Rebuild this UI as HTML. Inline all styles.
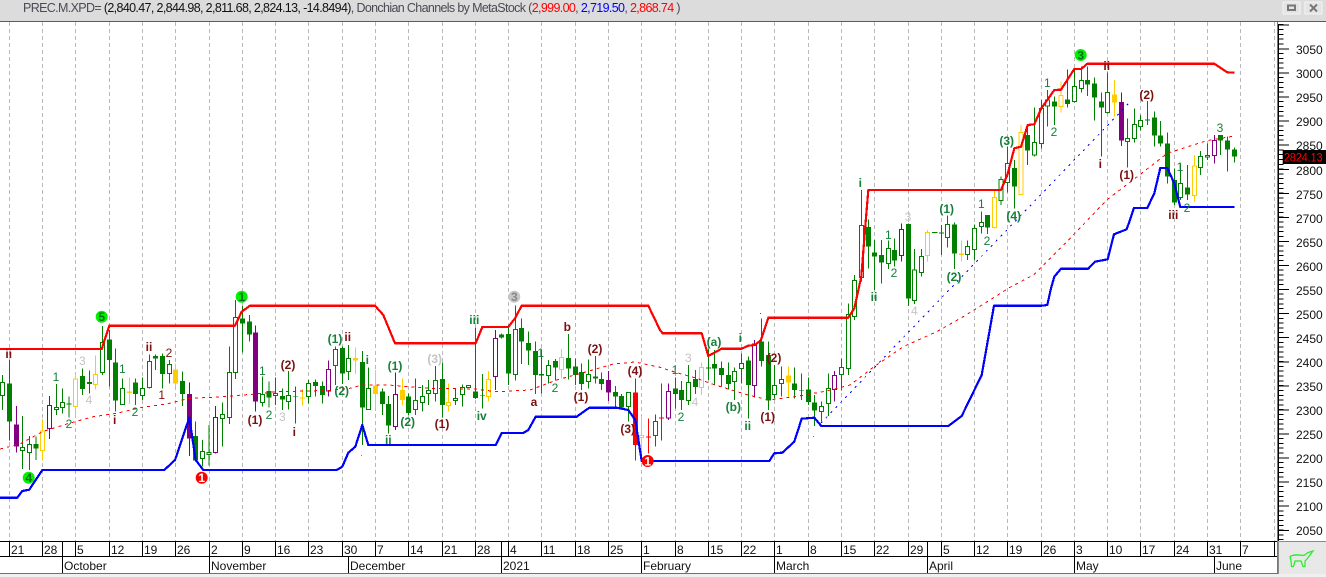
<!DOCTYPE html>
<html lang="en">
<head>
<meta charset="utf-8">
<title>PREC.M.XPD Chart</title>
<style>
html,body{margin:0;padding:0;background:#fff;width:1326px;height:577px;overflow:hidden}
svg{display:block}
.t{font-family:"Liberation Sans",sans-serif}
.gw,.pw,.yw,.rw{fill:none;stroke-width:3}
.gw{stroke:#007f00}.pw{stroke:#800080}.yw{stroke:#ffcc00}.rw{stroke:#f00}
.gb,.pb,.yb,.rb{fill:none;stroke-width:15}
.gb{stroke:#007f00}.pb{stroke:#800080}.yb{stroke:#ffcc00}.rb{stroke:#f00}
.gh,.ph,.yh,.rh{fill:#fff;stroke-width:3}
.gh{stroke:#007f00}.ph{stroke:#800080}.yh{stroke:#ffcc00}.rh{stroke:#f00}
.z{shape-rendering:crispEdges}
.lb text{font-family:"Liberation Sans",sans-serif;font-size:12px;text-anchor:middle}
.g{fill:#14803a}.m{fill:#7c1010}.s{fill:#c4c4c4}
.b{font-weight:bold}
.ax text{font-family:"Liberation Sans",sans-serif;font-size:12px;fill:#111}
</style>
</head>
<body>
<svg width="1326" height="577" viewBox="0 0 1326 577" xmlns="http://www.w3.org/2000/svg">
<rect width="1326" height="577" fill="#fff"/>
<!-- header -->
<rect width="1326" height="21" fill="#dcdcdc"/>
<rect y="21" width="1326" height="1" fill="#5c5c5c"/>
<text class="t" x="23" y="12" font-size="12.5" textLength="657.5" lengthAdjust="spacing" fill="#4a4a55">PREC.M.XPD= <tspan fill="#111">(2,840.47, 2,844.98, 2,811.68, 2,824.13, -14.8494)</tspan>, Donchian Channels by MetaStock (<tspan fill="#f00">2,999.00</tspan>, <tspan fill="#00f">2,719.50</tspan>, <tspan fill="#f00">2,868.74</tspan> )</text>
<!-- window buttons -->
<rect x="1283" y="2" width="17" height="12" fill="#e4e4e4" stroke="#f4f4f4"/>
<rect x="1288" y="5.5" width="7" height="4.5" fill="none" stroke="#777" stroke-width="2"/>
<rect x="1305" y="2" width="17" height="12" fill="#e4e4e4" stroke="#f4f4f4"/>
<path d="M1310 4.5l7 7M1317 4.5l-7 7" stroke="#777" stroke-width="2" fill="none"/>
<!-- grid -->
<path stroke="#b9b9b9" stroke-width="1" stroke-dasharray="4 3" fill="none" class="z" d="M9.5 22V541M42.5 22V541M75.5 22V541M109.5 22V541M142.5 22V541M175.5 22V541M209.5 22V541M242.5 22V541M275.5 22V541M308.5 22V541M342.5 22V541M375.5 22V541M408.5 22V541M442.5 22V541M475.5 22V541M508.5 22V541M541.5 22V541M575.5 22V541M608.5 22V541M641.5 22V541M675.5 22V541M708.5 22V541M741.5 22V541M774.5 22V541M808.5 22V541M841.5 22V541M874.5 22V541M908.5 22V541M941.5 22V541M974.5 22V541M1007.5 22V541M1041.5 22V541M1074.5 22V541M1107.5 22V541M1140.5 22V541M1174.5 22V541M1207.5 22V541M1240.5 22V541M1274.5 22V541"/>
<!-- candles zone A -->
<g class="z" transform="translate(0,290) scale(.33333)">
<path class="gw" d="M28 210V452M108 440V510M207 320V382M247 235V315M268 242V310M328 120V290M347 175V365M407 265V345M467 193V240M487 190V295M547 245V348M587 395V515M727 48V187M748 75V155M807 275V352M847 295V360M886 290V400M946 268V320M967 275V340M7 255V360M67 378V537M88 438V540M169 282V375M187 295V370M307 108V255M367 265V345M427 262V330M448 193V295M508 210V280M607 450V530M627 405V527M667 337V470M688 170V402M707 30V267M787 260V350M827 262V345M866 243V358M925 270V340"/>
<path class="gb" d="M28 280V395M108 462V475M207 340V344M247 258V297M268 276V282M328 148V210M347 217V332M407 277V312M467 198V206M487 198V252M547 273V312M587 438V512M727 85V101M748 94V134M807 303V323M847 318V329M886 319V321M946 276V288M967 288V315"/>
<path class="gh" d="M1 277h12v40h-12zM61 472h12v10h-12zM82 463h12v24h-12zM163 352h12v6h-12zM181 337h12v15h-12zM301 157h12v91h-12zM361 295h12v48h-12zM421 295h12v22h-12zM442 214h12v78h-12zM502 223h12v27h-12zM601 484h12v22h-12zM621 487h12v6h-12zM661 373h12v12h-12zM682 247h12v136h-12zM701 82h12v166h-12zM781 313h12v25h-12zM821 310h12v6h-12zM860 316h12v18h-12zM919 280h12v40h-12z"/>
<path class="pw" d="M49 348V487M568 277V498M767 107V365M148 318V447M647 348V490M986 212V320"/>
<path class="pb" d="M49 403V470M568 312V445M767 127V335"/>
<path class="ph" d="M142 346h12v70h-12zM641 382h12v106h-12zM980 238h12v65h-12z"/>
<path class="yw" d="M388 262V342M527 220V290M907 297V347M127 387V512M227 252V382M287 197V298"/>
<path class="yb" d="M388 305V309M527 238V280M907 322V326"/>
<path class="yh" d="M121 423h12v59h-12zM221 267h12v83h-12zM281 253h12v31h-12z"/>
</g>
<!-- candles zone B -->
<g class="z" transform="translate(330,290) scale(.33333)">
<path class="gw" d="M37 170V282M97 183V465M157 295V375M175 318V430M236 310V375M337 217V382M436 112V327M457 252V355M514 130V146M536 105V285M574 85V222M595 125V225M616 155V312M635 178V310M676 207V272M716 132V268M737 205V285M755 220V300M796 198V280M815 248V300M856 288V355M875 312V355M16 170V285M55 165V270M115 232V360M256 265V375M277 285V365M296 270V345M316 228V335M377 295V345M397 283V350M556 47V272M655 210V280M775 208V295M895 307V395"/>
<path class="gb" d="M37 174V251M97 216V353M157 304V342M175 342V407M236 319V369M337 267V345M436 304V324M457 315V317M514 133V143M536 132V251M574 114V155M595 159V182M616 183V255M635 252V257M676 213V233M716 204V236M737 229V255M755 246V282M796 259V265M815 267V282M856 306V320M875 318V352"/>
<path class="gh" d="M10 178h12v49h-12zM49 205h12v40h-12zM109 295h12v63h-12zM250 331h12v28h-12zM271 319h12v19h-12zM290 301h12v10h-12zM310 271h12v40h-12zM371 325h12v6h-12zM391 292h12v22h-12zM410 287h12v6h-12zM550 118h12v136h-12zM649 226h12v31h-12zM769 253h12v22h-12zM889 307h12v43h-12z"/>
<path class="pw" d="M835 243V333M196 247V420M496 120V300"/>
<path class="pb" d="M835 270V308"/>
<path class="ph" d="M190 313h12v97h-12zM490 145h12v115h-12z"/>
<path class="yw" d="M76 172V252M136 240V355M217 265V345M355 280V365M476 243V335M695 177V265M935 378V510"/>
<path class="yb" d="M76 204V212M136 287V312M217 300V330"/>
<path class="yh" d="M349 337h12v10h-12zM470 268h12v52h-12zM689 202h12v36h-12zM929 436h12v6h-12z"/>
<path class="rw" d="M916 265V512M955 385V490M977 373V470"/>
<path class="rb" d="M916 307V465M955 439V442"/>
<path class="rh" d="M971 394h12v42h-12z"/>
</g>
<!-- candles zone C -->
<g class="z" transform="translate(660,290) scale(.33333)">
<path class="rw" d="M4 280V452"/>
<path class="rb" d="M4 382V385"/>
<path class="pw" d="M25 280V390M283 150V322M523 243V335"/>
<path class="ph" d="M19 304h12v80h-12zM277 162h12v125h-12zM517 256h12v42h-12z"/>
<path class="gw" d="M46 262V355M64 273V360M106 240V312M145 175V270M163 180V285M184 215V290M205 218V298M265 200V385M304 85V230M325 155V360M403 232V325M424 250V330M445 263V345M463 315V408M85 225V345M223 233V330M244 190V280M343 225V325M364 230V320M484 335V395M505 250V378M544 205V302M565 40V255"/>
<path class="gb" d="M46 295V312M64 300V330M106 267V291M145 232V236M163 222V236M184 234V255M205 255V282M265 211V285M304 154V213M325 195V332M403 280V300M424 300V302M445 298V336M463 337V362"/>
<path class="gh" d="M79 277h12v55h-12zM217 244h12v31h-12zM238 220h12v16h-12zM337 287h12v27h-12zM358 268h12v13h-12zM478 349h12v15h-12zM499 295h12v46h-12zM538 232h12v22h-12zM559 73h12v163h-12z"/>
<path class="yw" d="M124 218V315M385 230V322"/>
<path class="yb" d="M385 256V278"/>
<path class="yh" d="M118 232h12v60h-12z"/>
</g>
<!-- candles zone D -->
<g class="z" transform="translate(820,170) scale(.33333)">
<path class="gw" d="M103 315V450M124 60V335M205 212V297M283 237V402M304 237V320M382 137V232M442 212V270M463 163V270M484 125V190M145 148V295M163 210V360M184 210V340M223 205V290M265 160V408M336 187H352M364 165V255M403 158V297M503 135V192"/>
<path class="gb" d="M145 171V230M163 247V260M184 255V278M223 240V272M265 162V386M364 188V190M403 163V251M503 135V173"/>
<path class="gh" d="M97 331h12v109h-12zM118 166h12v156h-12zM199 235h12v45h-12zM277 300h12v91h-12zM298 259h12v48h-12zM376 163h12v40h-12zM436 230h12v23h-12zM457 175h12v63h-12zM478 157h12v12h-12z"/>
<path class="pw" d="M244 160V275"/>
<path class="ph" d="M238 178h12v79h-12z"/>
<path class="yw" d="M322 180V275M424 212V275"/>
<path class="yb" d="M424 251V255"/>
<path class="yh" d="M316 187h12v69h-12z"/>
</g>
<!-- candles zone E -->
<g class="z" transform="translate(990,0) scale(.33333)">
<path class="yw" d="M13 570V685M93 375V585M213 245V338M613 465V605M373 240V350"/>
<path class="yb" d="M373 283V307"/>
<path class="yh" d="M7 592h12v90h-12zM87 397h12v187h-12zM207 286h12v33h-12zM607 498h12v88h-12z"/>
<path class="gw" d="M33 530V615M52 440V578M133 323V470M154 300V445M172 270V380M253 210V307M274 200V277M352 217V340M412 355V503M433 325V428M451 345V392M571 490V600M632 453V525M652 430V480M73 480V625M113 375V495M193 290V375M232 208V322M292 200V288M313 232V362M334 278V470M472 303V375M493 335V440M511 363V440M532 397V550M553 505V615M592 495V600M692 405V465M712 410V515M733 442V488"/>
<path class="gb" d="M73 504V560M113 405V452M193 304V320M232 298V312M292 240V254M313 250V293M334 305V323M472 358V361M493 352V407M511 406V430M532 430V530M553 540V607M592 562V584M692 405V422M712 421V449M733 448V470"/>
<path class="gh" d="M27 538h12v64h-12zM46 490h12v57h-12zM127 428h12v37h-12zM148 325h12v105h-12zM166 300h12v18h-12zM247 259h12v45h-12zM268 241h12v25h-12zM346 277h12v60h-12zM406 415h12v9h-12zM427 373h12v42h-12zM445 361h12v18h-12zM565 550h12v42h-12zM626 469h12v33h-12zM646 466h12v5h-12z"/>
<path class="pw" d="M394 277V438M673 405V490"/>
<path class="pb" d="M394 306V422"/>
<path class="ph" d="M667 421h12v45h-12z"/>
</g>
<!-- moving average -->
<path class="z" fill="none" stroke="#f00" stroke-width="1" stroke-dasharray="3 4" d="M0 449L20 444L42.3 431.7L69 423.3L93.3 416.7L116.7 413.3L142.3 407.3L166.7 404L189.3 398.3L213.3 397.3L255.7 394L276.7 391.7L330 390.4L350 388.3L362.3 385L388.3 385L430 388.3L475.3 389L496.7 391.7L530 390L556.7 380L586.7 371.7L613.3 364L635 362L660 367.3L676.7 372.7L696.7 378.3L715 385L748.3 395L768.3 400L795 396.7L826.7 391L850 385L873.3 367.3L903.3 346.7L936.7 331.7L963.3 316.7L990 300L1010 287.3L1033.3 275L1073.3 235L1106.7 200L1141.7 173.3L1167.3 153.3L1206.7 140.7L1234.3 136"/>
<!-- trend line -->
<path class="z" fill="none" stroke="#00f" stroke-width="1" stroke-dasharray="2 5" d="M821 423L1131 101"/>
<!-- channel lines -->
<path class="z" fill="none" stroke="#f00" stroke-width="2.2" stroke-linejoin="round" d="M0 349L101.7 349L109.3 325.7L235 325.7L241.7 311.7L250 305.7L375 305.7L383.3 315L395 343.3L475.7 343.3L482.3 327L508.3 327L515 318.3L521.7 305.7L648.3 305.7L660 330L662.7 333.3L701.7 333.3L708.3 356L721.7 348.7L741.7 348.7L748.3 345.7L755 345L761 340L768.3 317.7L848.3 317.7L854.3 308.3L861.3 276.7L865 230L868.3 190L1001 190L1007.3 175L1014.3 148.3L1021 146.7L1027.7 125L1034.3 124.3L1041.3 108.3L1047.3 100L1054.3 90L1061 89.7L1074.3 69L1081.3 69L1087.3 63.7L1214.3 63.7L1227.3 72.3L1234.3 72.7"/>
<path class="z" fill="none" stroke="#00f" stroke-width="2.2" stroke-linejoin="round" d="M0 497.7L17.3 497.7L22.3 491L29.3 489.7L42.3 470L164.3 470L175 460L189.3 417.7L195.7 460L203.3 470L336.7 470L342.3 466.7L348.3 452.7L355.3 446.7L362.3 425L368.3 445L495.7 445L501.7 433L523.3 433L528.3 430L535.7 416.7L576.7 416.7L589.3 407.7L616.7 407.7L628.3 410L635.3 420L641.7 461L769.3 461L774.3 453.3L782.3 452.7L794.3 441.7L801.7 418.7L814.3 417.7L821.3 426L948.3 426L961.7 416L981.7 375L990 328.3L994 305.7L1041.7 305.7L1047.3 305L1051 288.3L1054.3 276.7L1061 268.7L1088.3 268.7L1095 261.7L1107.7 259.3L1114 234.3L1126.7 229.3L1134 208L1147.3 208L1154.3 193.3L1160.3 168L1167.3 168L1174.3 183.3L1180.3 207L1234.3 207"/>
<!-- wave labels -->
<g class="lb">
<text class="m b" x="8.7" y="358">ii</text>
<text class="s" x="82.3" y="365">3</text>
<text class="s" x="89" y="404">4</text>
<text class="g" x="56" y="381">1</text>
<text class="g" x="69" y="428">2</text>
<text class="g" x="122.3" y="373">1</text>
<text class="m b" x="114.7" y="424">i</text>
<text class="g" x="135" y="416">2</text>
<text class="m b" x="149" y="351">ii</text>
<text class="m" x="169" y="357">2</text>
<text class="m" x="161.7" y="399">1</text>
<text class="g" x="262.3" y="375">1</text>
<text class="m b" x="255" y="424">(1)</text>
<text class="m b" x="288" y="369">(2)</text>
<text class="g" x="269" y="419">2</text>
<text class="s" x="282.3" y="421">3</text>
<text class="m b" x="294.3" y="436">i</text>
<text class="g b" x="335" y="343">(1)</text>
<text class="m b" x="347.7" y="341">ii</text>
<text class="g b" x="341.7" y="395">(2)</text>
<text class="g b" x="367.3" y="364">i</text>
<text class="g b" x="395" y="370">(1)</text>
<text class="g b" x="388.3" y="444">ii</text>
<text class="g b" x="407.7" y="426">(2)</text>
<text class="s b" x="434.7" y="363">(3)</text>
<text class="m b" x="442" y="428">(1)</text>
<text class="g b" x="474.3" y="324">iii</text>
<text class="g b" x="481.7" y="420">iv</text>
<text class="m b" x="534" y="406">a</text>
<text class="g" x="540.7" y="357">1</text>
<text class="g" x="555" y="392">2</text>
<text class="m b" x="567.3" y="331">b</text>
<text class="m b" x="595" y="353">(2)</text>
<text class="m b" x="581" y="401">(1)</text>
<text class="m b" x="635" y="375">(4)</text>
<text class="m b" x="627.7" y="433">(3)</text>
<text class="g" x="675" y="374">1</text>
<text class="s" x="688.3" y="362">3</text>
<text class="g" x="681" y="421">2</text>
<text class="s" x="695" y="406">4</text>
<text class="g b" x="714" y="346">(a)</text>
<text class="g b" x="733.3" y="411">(b)</text>
<text class="g b" x="740.3" y="342">i</text>
<text class="g b" x="747.7" y="430">ii</text>
<text class="m b" x="774" y="362">(2)</text>
<text class="m b" x="767.7" y="421">(1)</text>
<text class="g b" x="874" y="301">ii</text>
<text class="s" x="914.3" y="315">4</text>
<text class="g b" x="860.3" y="187">i</text>
<text class="g" x="888.3" y="239">1</text>
<text class="g" x="894" y="277">2</text>
<text class="s" x="908" y="221">3</text>
<text class="g b" x="946.7" y="213">(1)</text>
<text class="g b" x="954" y="281">(2)</text>
<text class="g" x="981.3" y="208">1</text>
<text class="g" x="987" y="245">2</text>
<text class="g b" x="1013.7" y="220">(4)</text>
<text class="g b" x="1006.7" y="145">(3)</text>
<text class="g" x="1047.3" y="87">1</text>
<text class="g" x="1054" y="136">2</text>
<text class="m b" x="1106.7" y="70">ii</text>
<text class="m b" x="1100.3" y="168">i</text>
<text class="m b" x="1146.7" y="99">(2)</text>
<text class="m b" x="1126.7" y="179">(1)</text>
<text class="m b" x="1173.3" y="219">iii</text>
<text class="g" x="1180" y="171">1</text>
<text class="g" x="1187" y="212">2</text>
<text class="g" x="1220" y="132">3</text>
<circle cx="101.7" cy="316.7" r="6" fill="#00f000"/><text class="b" x="101.7" y="321" fill="#056b20">5</text>
<circle cx="28.7" cy="477.7" r="6" fill="#00f000"/><text class="b" x="28.7" y="482" fill="#056b20">4</text>
<circle cx="241.7" cy="296.7" r="6" fill="#00f000"/><text class="b" x="241.7" y="301" fill="#056b20">1</text>
<circle cx="1080.7" cy="55" r="6" fill="#00f000"/><text class="b" x="1080.7" y="59.3" fill="#056b20">3</text>
<circle cx="514.3" cy="296.7" r="6" fill="#c8c8c8"/><text class="b" x="514.3" y="301" fill="#888">3</text>
<circle cx="201.7" cy="477.7" r="6" fill="#f00"/><text class="b" x="201.7" y="482" fill="#fff">1</text>
<circle cx="647.7" cy="461" r="6" fill="#f00"/><text class="b" x="647.7" y="465.3" fill="#fff">1</text>
</g>
<rect x="760" y="313" width="1" height="1" fill="#f00"/>
<rect x="813" y="436" width="1" height="1" fill="#0c0"/>
<rect x="361" y="455" width="1" height="1" fill="#0c0"/>
<!-- bottom axis -->
<g class="ax">
<path d="M0 541.5H1277M0 556.5H1277" stroke="#000" fill="none" class="z"/>
<path class="z" stroke="#000" fill="none" d="M9.5 541V557M42.5 541V557M62.5 541V573M75.5 541V557M109.5 541V557M142.5 541V557M175.5 541V557M209.5 541V573M242.5 541V557M275.5 541V557M308.5 541V557M342.5 541V557M348.5 557V573M375.5 541V557M408.5 541V557M442.5 541V557M475.5 541V557M501.5 541V573M508.5 541V557M541.5 541V557M575.5 541V557M608.5 541V557M641.5 541V573M675.5 541V557M708.5 541V557M741.5 541V557M774.5 541V573M808.5 541V557M841.5 541V557M874.5 541V557M908.5 541V557M927.5 541V573M941.5 541V557M974.5 541V557M1007.5 541V557M1041.5 541V557M1074.5 541V573M1107.5 541V557M1140.5 541V557M1174.5 541V557M1207.5 541V557M1214.5 557V573M1240.5 541V557M1274.5 541V557"/>
<g transform="translate(0,1)">
<text x="11" y="553">21</text><text x="44" y="553">28</text><text x="77" y="553">5</text><text x="111" y="553">12</text><text x="144" y="553">19</text><text x="177" y="553">26</text><text x="211" y="553">2</text><text x="244" y="553">9</text><text x="277" y="553">16</text><text x="310" y="553">23</text><text x="344" y="553">30</text><text x="377" y="553">7</text><text x="410" y="553">14</text><text x="444" y="553">21</text><text x="477" y="553">28</text><text x="510" y="553">4</text><text x="543" y="553">11</text><text x="577" y="553">18</text><text x="610" y="553">25</text><text x="643" y="553">1</text><text x="677" y="553">8</text><text x="710" y="553">15</text><text x="743" y="553">22</text><text x="776" y="553">1</text><text x="810" y="553">8</text><text x="843" y="553">15</text><text x="876" y="553">22</text><text x="910" y="553">29</text><text x="943" y="553">5</text><text x="976" y="553">12</text><text x="1009" y="553">19</text><text x="1043" y="553">26</text><text x="1076" y="553">3</text><text x="1109" y="553">10</text><text x="1142" y="553">17</text><text x="1176" y="553">24</text><text x="1209" y="553">31</text><text x="1242" y="553">7</text>
<text x="64" y="569">October</text><text x="211" y="569">November</text><text x="350" y="569">December</text><text x="503" y="569">2021</text><text x="643" y="569">February</text><text x="776" y="569">March</text><text x="929" y="569">April</text><text x="1076" y="569">May</text><text x="1216" y="569">June</text>
</g>
</g>
<rect y="573" width="1278" height="1" fill="#707070"/>
<rect y="574" width="1326" height="3" fill="#f0f0f0"/>
<!-- right axis -->
<rect x="1277" y="22" width="1" height="552" fill="#777"/>
<g class="ax">
<path class="z" d="M1278.5 24V541" stroke="#000" fill="none"/>
<line class="z" x1="1281" y1="24.2" x2="1281" y2="540" stroke="#000" stroke-width="5" stroke-dasharray="1 3.813"/>
<line class="z" x1="1284" y1="24.4" x2="1284" y2="540" stroke="#000" stroke-width="10" stroke-dasharray="1 23.065"/>
<g transform="translate(0,1)">
<text x="1296" y="53">3050</text><text x="1296" y="77">3000</text><text x="1296" y="101">2950</text><text x="1296" y="125">2900</text><text x="1296" y="149">2850</text><text x="1296" y="174">2800</text><text x="1296" y="198">2750</text><text x="1296" y="222">2700</text><text x="1296" y="246">2650</text><text x="1296" y="270">2600</text><text x="1296" y="294">2550</text><text x="1296" y="318">2500</text><text x="1296" y="342">2450</text><text x="1296" y="366">2400</text><text x="1296" y="390">2350</text><text x="1296" y="414">2300</text><text x="1296" y="438">2250</text><text x="1296" y="462">2200</text><text x="1296" y="486">2150</text><text x="1296" y="510">2100</text><text x="1296" y="534">2050</text>
</g>
</g>
<rect x="1282.7" y="150" width="43.3" height="14" fill="#000"/>
<text class="t" x="1284" y="161.5" font-size="12" fill="#f00" textLength="38.5" lengthAdjust="spacingAndGlyphs">2824.13</text>
<!-- corner box -->
<rect x="1278" y="541" width="48" height="33" fill="#e8e8e8"/>
<path d="M1278.5 542V574M1278.5 541.5H1326" stroke="#8a8a8a" fill="none" class="z"/>
<path d="M1290 556.5C1294 554 1300 555 1304 555.5L1308 552.5L1313 551L1310 555L1307.5 558.5L1305 561L1305 566.5H1303L1301 561H1295L1293.5 566.5H1291.5L1291 561L1290 556.5Z" fill="none" stroke="#22ee22" stroke-width="1.2"/>
</svg>
</body>
</html>
